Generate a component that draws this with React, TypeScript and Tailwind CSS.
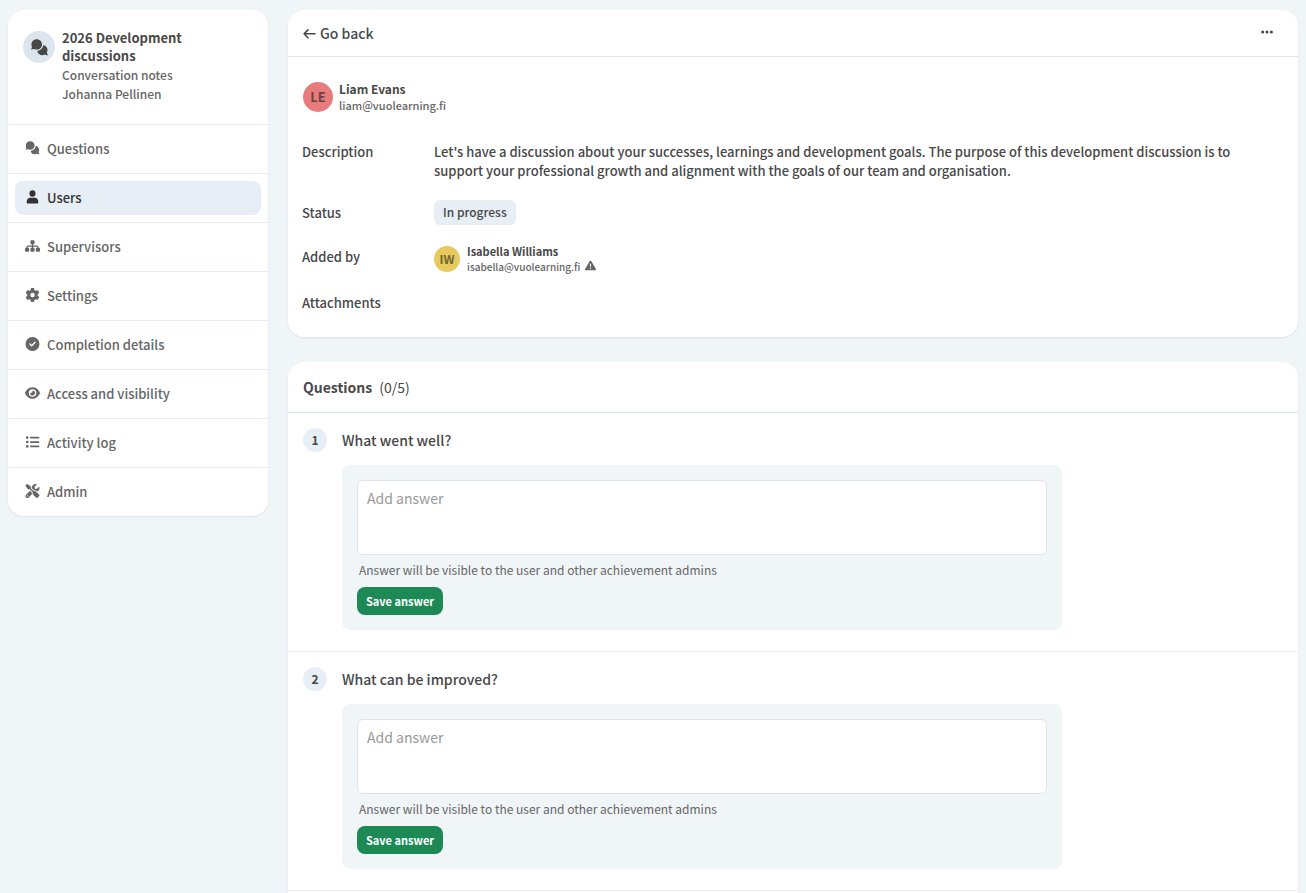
import React from "react";
import {
  FaSitemap,
  FaGear,
  FaCircleCheck,
  FaEye,
  FaListUl,
  FaScrewdriverWrench,
  FaEllipsis,
  FaTriangleExclamation,
} from "react-icons/fa6";

type IconProps = { className?: string };

function ChatsIcon({ className }: IconProps) {
  return (
    <svg viewBox="0 0 17 17" fill="currentColor" className={className} aria-hidden="true">
      <path d="M5.7 0.2C8.8 0.2 11 2.5 11 5.4C11 8.4 8.7 10.5 5.7 10.5C4.7 10.5 3.8 10.3 3 9.9L0.4 10.6C0.2 10.6 0.1 10.5 0.2 10.3L1 8C0.6 7.2 0.4 6.4 0.4 5.4C0.4 2.5 2.7 0.2 5.7 0.2Z" />
      <path d="M12.3 5.9C14.8 6.4 16.5 8.4 16.5 10.8C16.5 11.9 16.3 12.8 15.9 13.6L16.8 16.2C16.9 16.4 16.7 16.6 16.5 16.5L13.9 15.6C13 16 12.2 16.2 11.3 16.2C8.8 16.2 6.8 14.5 6.2 12A6.6 6.6 0 0 0 12.3 5.9Z" />
    </svg>
  );
}

function PersonIcon({ className }: IconProps) {
  return (
    <svg viewBox="0 0 12 13" fill="currentColor" className={className} aria-hidden="true">
      <ellipse cx="6" cy="3.2" rx="2.8" ry="3" />
      <path d="M3.8 7.3H8.2C10.2 7.3 11.3 8.9 11.4 11.3C11.4 12 11.1 12.5 10.5 12.5H1.5C0.9 12.5 0.6 12 0.6 11.3C0.7 8.9 1.8 7.3 3.8 7.3Z" />
    </svg>
  );
}

function ArrowIcon({ className }: IconProps) {
  return (
    <svg
      viewBox="0 0 13 13"
      fill="none"
      stroke="currentColor"
      strokeWidth="1.6"
      strokeLinecap="round"
      strokeLinejoin="round"
      className={className}
      aria-hidden="true"
    >
      <path d="M12 6.8H1.2M5 2.9L1.1 6.8L5 10.7" />
    </svg>
  );
}

const navItems = [
  { label: "Questions", icon: ChatsIcon },
  { label: "Users", icon: PersonIcon, active: true },
  { label: "Supervisors", icon: FaSitemap },
  { label: "Settings", icon: FaGear },
  { label: "Completion details", icon: FaCircleCheck },
  { label: "Access and visibility", icon: FaEye },
  { label: "Activity log", icon: FaListUl },
  { label: "Admin", icon: FaScrewdriverWrench },
];

const questions = ["What went well?", "What can be improved?"];

function Sidebar() {
  return (
    <aside className="w-65 shrink-0 self-start overflow-hidden rounded-2xl bg-white shadow-[0_1px_2px_#d9e2ec]">
      <div className="flex gap-[7px] px-[15px] pt-[19px] pb-[21px]">
        <div className="mt-[2px] flex size-8 shrink-0 items-center justify-center rounded-full bg-[#dce5ee]">
          <ChatsIcon className="size-[17px]" />
        </div>
        <div className="min-w-0 flex-1 pr-8">
          <h1 className="text-[13px] leading-[18px] font-bold">2026 Development discussions</h1>
          <p className="text-xs leading-[19px] font-medium text-[#666]">Conversation notes</p>
          <p className="text-xs leading-[19px] font-medium text-[#666]">Johanna Pellinen</p>
        </div>
      </div>
      <nav>
        {navItems.map(({ label, icon: Icon, active }) => (
          <div key={label} className="border-t border-[#e7eef5] px-[7px] py-[7px]">
            <a
              href="#"
              aria-current={active ? "page" : undefined}
              className={
                active
                  ? "flex h-[34px] items-center gap-[7px] rounded-lg bg-[#e7eef5] px-[10px] text-[13px] leading-5 font-medium text-[#333]"
                  : "flex h-[34px] items-center gap-[7px] rounded-lg px-[10px] text-[13px] leading-5 font-medium text-[#666]"
              }
            >
              <Icon className="mb-[2px] h-[14px] w-[15px] shrink-0" />
              {label}
            </a>
          </div>
        ))}
      </nav>
    </aside>
  );
}

function Details() {
  return (
    <section className="rounded-2xl bg-white shadow-[0_1px_2px_#d9e2ec]">
      <div className="flex h-[47px] items-center justify-between border-b border-[#dce5ee] pr-6 pl-[15px]">
        <a href="#" className="flex items-center gap-1 text-sm leading-5 font-medium">
          <ArrowIcon className="size-[13px]" />
          Go back
        </a>
        <button type="button" aria-label="More actions" className="pb-[2px]">
          <FaEllipsis className="size-[14px]" />
        </button>
      </div>
      <div className="flex items-center gap-[6px] px-[15px] pt-6">
        <div className="flex size-[30px] items-center justify-center rounded-full bg-[#e87c7c] text-[13px] leading-5 font-bold text-[#743e3e]">
          LE
        </div>
        <div>
          <p className="text-xs leading-4 font-bold">Liam Evans</p>
          <p className="text-[11px] leading-4 font-medium text-[#666]">liam@vuolearning.fi</p>
        </div>
      </div>
      <dl className="grid grid-cols-[132px_1fr] pt-[29px] pr-6 pb-[25px] pl-[14px] text-[13px] leading-[19px] font-medium">
        <dt>Description</dt>
        <dd className="pb-5">
          Let's have a discussion about your successes, learnings and development goals. The purpose of this development
          discussion is to support your professional growth and alignment with the goals of our team and organisation.
        </dd>
        <dt className="pt-[3px]">Status</dt>
        <dd className="flex pb-[18px]">
          <span className="rounded-md bg-[#e7eef5] px-[9px] pb-px text-xs leading-6">In progress</span>
        </dd>
        <dt className="pt-1">Added by</dt>
        <dd className="flex items-center gap-[7px] pb-[18px]">
          <div className="flex size-[26px] items-center justify-center rounded-full bg-[#e6ca5e] text-xs font-bold text-[#73652f]">
            IW
          </div>
          <div>
            <p className="text-[11px] leading-4 font-bold">Isabella Williams</p>
            <p className="flex items-center gap-[5px] text-[10px] leading-4 text-[#666]">
              isabella@vuolearning.fi
              <FaTriangleExclamation className="mb-1 size-[11px]" />
            </p>
          </div>
        </dd>
        <dt>Attachments</dt>
        <dd />
      </dl>
    </section>
  );
}

function Question({ number, title }: { number: number; title: string }) {
  const id = `answer-${number}`;
  return (
    <li className="flex gap-[15px] border-b border-[#e7eef5] px-[15px] pt-[15px] pb-[21px]">
      <span className="flex size-6 shrink-0 items-center justify-center rounded-full bg-[#e7eef5] text-xs leading-4 font-bold">
        {number}
      </span>
      <div className="min-w-0 flex-1">
        <label htmlFor={id} className="block text-sm leading-6 font-medium">
          {title}
        </label>
        <form className="mt-[13px] flex max-w-180 flex-col items-start rounded-lg bg-[#f0f5f8] p-[15px]">
          <textarea
            id={id}
            placeholder="Add answer"
            className="block h-[75px] w-full resize-none rounded-md border border-[#dce5ee] bg-white px-[9px] py-[7px] text-sm leading-5 placeholder:text-[#999]"
          />
          <p className="mt-[5px] px-[2px] text-xs leading-5 text-[#666]">
            Answer will be visible to the user and other achievement admins
          </p>
          <button
            type="button"
            className="mt-[7px] h-7 rounded-lg bg-[#1d8a56] px-[9px] text-[11px] leading-4 font-bold text-white"
          >
            Save answer
          </button>
        </form>
      </div>
    </li>
  );
}

export default function App() {
  return (
    <div className="flex h-screen gap-5 overflow-hidden bg-[#f0f5f8] px-2 pt-[10px] font-['Noto_Sans_CJK_SC',sans-serif] text-[#484848]">
      <Sidebar />
      <main className="flex min-w-0 flex-1 flex-col gap-[25px]">
        <Details />
        <section className="flex-1 rounded-t-2xl bg-white shadow-[0_1px_2px_#d9e2ec]">
          <h2 className="flex h-[51px] items-center gap-[7px] border-b border-[#dce5ee] px-[15px] text-sm leading-5 font-bold">
            Questions <span className="font-normal">(0/5)</span>
          </h2>
          <ol>
            {questions.map((title, index) => (
              <Question key={title} number={index + 1} title={title} />
            ))}
          </ol>
        </section>
      </main>
    </div>
  );
}
